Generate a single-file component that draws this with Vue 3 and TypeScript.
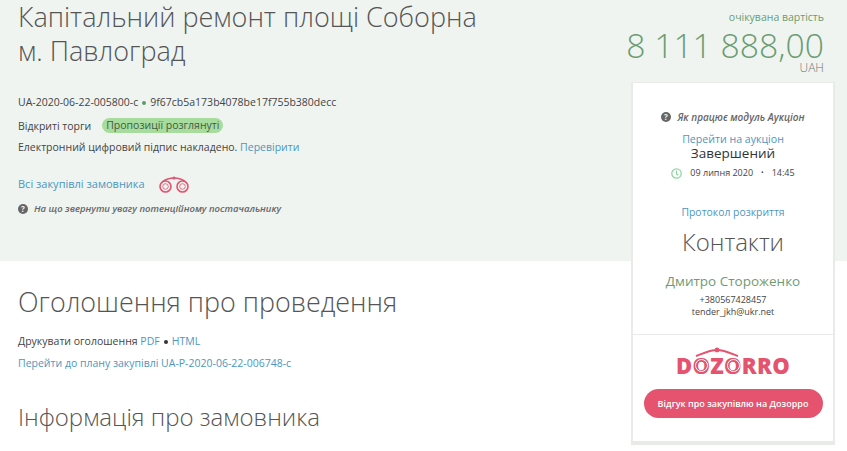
<template>
  <div class="page">
    <main class="left">
      <h1 class="title">Капітальний ремонт площі Соборна<br />м. Павлоград</h1>
      <p class="ids">UA-2020-06-22-005800-c<span class="dot green"></span>9f67cb5a173b4078be17f755b380decc</p>
      <p class="status">
        <span>Відкриті торги</span>
        <span class="badge">Пропозиції розглянуті</span>
      </p>
      <p class="sign">Електронний цифровий підпис накладено. <a>Перевірити</a></p>
      <p class="all">
        <a>Всі закупівлі замовника</a>
        <svg class="bino" width="32" height="17" viewBox="0 0 32 17" fill="none" stroke="#e0556f">
          <circle cx="7.5" cy="10.5" r="5.5" stroke-width="1.6" />
          <circle cx="7.5" cy="10.5" r="2.8" stroke-width="1" opacity="0.8" />
          <circle cx="24.5" cy="10.5" r="5.5" stroke-width="1.6" />
          <circle cx="24.5" cy="10.5" r="2.8" stroke-width="1" opacity="0.8" />
          <path d="M4 6 C8 3 11 2 16 2 C21 2 24 3 28 6" stroke-width="1.5" />
          <circle cx="16" cy="2" r="1.6" fill="#e0556f" stroke="none" />
        </svg>
      </p>
      <p class="hint">
        <svg width="10" height="10" viewBox="0 0 10 10"><circle cx="5" cy="5" r="5" fill="#666" /><text x="5" y="8" text-anchor="middle" class="q">?</text></svg>
        <em>На що звернути увагу потенційному постачальнику</em>
      </p>

      <h2 class="notice">Оголошення про проведення</h2>
      <p class="print">Друкувати оголошення <a>PDF</a><span class="dot"></span><a>HTML</a></p>
      <p class="plan"><a>Перейти до плану закупівлі UA-P-2020-06-22-006748-c</a></p>
      <h2 class="buyer">Інформація про замовника</h2>
    </main>

    <aside class="right">
      <div class="price">
        <div class="price-label">очікувана вартість</div>
        <div class="price-value">8 111 888,00</div>
        <div class="price-cur">UAH</div>
      </div>
      <div class="card">
        <div class="card-top">
          <p class="hint hint-center">
            <svg width="10" height="10" viewBox="0 0 10 10"><circle cx="5" cy="5" r="5" fill="#666" /><text x="5" y="8" text-anchor="middle" class="q">?</text></svg>
            <em>Як працює модуль Аукціон</em>
          </p>
          <a class="go">Перейти на аукціон</a>
          <div class="done">Завершений</div>
          <div class="date">
            <svg width="11" height="11" viewBox="0 0 11 11" fill="none" stroke="#8fd6a4" stroke-width="1.3">
              <circle cx="5.5" cy="5.5" r="4.7" />
              <path d="M5.5 2.6 V5.8 L7.4 7.2" />
            </svg>
            <span>09 липня 2020</span>
            <span class="sep">•</span>
            <span>14:45</span>
          </div>
          <a class="proto">Протокол розкриття</a>
          <div class="contacts">Контакти</div>
          <div class="person">Дмитро Стороженко</div>
          <div class="small phone">+380567428457</div>
          <div class="small">tender_jkh@ukr.net</div>
        </div>
        <div class="card-bottom">
          <div class="logo">
            <span>D</span>
            <span class="lens">O</span>
            <span>Z</span>
            <span class="lens">O</span>
            <span>RRO</span>
            <svg class="logo-arc" width="50" height="10" viewBox="0 0 50 10" fill="none" stroke="#e5536e" stroke-width="2">
              <path d="M4 9 C12 6 18 3 25 3 C32 3 38 6 46 9" />
              <circle cx="25" cy="3" r="2.4" fill="#e5536e" stroke="none" />
            </svg>
          </div>
          <button class="review">Відгук про закупівлю на Дозорро</button>
        </div>
      </div>
    </aside>
  </div>
</template>

<script setup lang="ts">
</script>

<style>
html, body { margin: 0; background: #fff; }
</style>

<style scoped>
.page {
  display: flex;
  justify-content: space-between;
  height: 451px;
  overflow: hidden;
  background: linear-gradient(#eff4f1 261px, #fff 261px);
  font-family: "Open Sans", "Noto Sans", sans-serif;
  font-size: 10.5px;
  color: #444;
}
a { color: #4d96bf; text-decoration: none; }
p { margin: 0; }
.left { padding: 0 0 0 18px; }
.title {
  margin: 0;
  font-size: 27px;
  line-height: 34px;
  font-weight: 300;
  color: #555;
}
.ids { margin-top: 27px; line-height: 14px; }
.dot {
  display: inline-block;
  width: 4px;
  height: 4px;
  margin: 0 4px;
  border-radius: 50%;
  background: #333;
  vertical-align: 1px;
}
.green { background: #5c9a6a; }
.status { margin-top: 9px; display: flex; align-items: center; gap: 11px; line-height: 14px; }
.badge {
  background: #a8dc9e;
  border-radius: 8px;
  padding: 0 4px;
  line-height: 15px;
  color: #3f5c40;
}
.sign { margin-top: 7px; line-height: 14px; }
.all { margin-top: 21px; display: flex; align-items: center; gap: 13px; line-height: 18px; font-size: 11px; }
.hint { display: flex; align-items: center; gap: 6px; margin-top: 9px; color: #666; font-weight: 600; font-size: 9.5px; line-height: 14px; }
.q { font-size: 8px; font-weight: 700; fill: #eff4f1; font-style: normal; }
.notice {
  margin: 68px 0 0;
  font-size: 26.9px;
  line-height: 36px;
  font-weight: 300;
  color: #555;
}
.print { margin-top: 14px; line-height: 14px; }
.plan { margin-top: 8px; line-height: 14px; }
.buyer {
  margin: 31px 0 0;
  font-size: 24px;
  line-height: 32px;
  font-weight: 300;
  color: #555;
}
.right { width: 216px; }
.price { text-align: right; margin-left: -20px; padding-right: 23px; height: 82px; box-sizing: border-box; color: #6b9c72; }
.price-label { padding-top: 10px; font-size: 10.5px; line-height: 14px; }
.price-value { font-size: 33.7px; line-height: 36px; font-weight: 300; margin-top: 3px; white-space: nowrap; color: #6b9c72; }
.price-cur { font-size: 12px; line-height: 10px; font-weight: 300; color: #777; }
.card {
  width: 204px;
  height: 363px;
  box-sizing: border-box;
  background: #fff;
  border: solid #e9ebe9;
  border-width: 1px 2px 4px;
  text-align: center;
}
.card-top { height: 252px; border-bottom: 1px solid #e9ebe9; padding-top: 27px; box-sizing: border-box; }
.hint-center { justify-content: center; margin: 0; font-size: 10px; }
.go { display: block; font-size: 10.6px; line-height: 14px; margin-top: 8px; }
.done { font-size: 13.5px; line-height: 16px; margin-top: -1px; color: #333; }
.date { display: flex; justify-content: center; align-items: center; gap: 8px; margin-top: 5px; font-size: 9px; line-height: 14px; color: #444; }
.sep { font-size: 7px; }
.proto { display: block; margin-top: 25px; line-height: 14px; font-size: 10.4px; }
.contacts { margin-top: 6px; font-size: 24px; font-weight: 300; line-height: 34px; color: #555; }
.person { margin-top: 12px; font-size: 13.5px; line-height: 20px; color: #6f9a73; }
.small { font-size: 9px; line-height: 12px; color: #444; }
.phone { margin-top: 3px; }
.card-bottom { padding-top: 15px; display: flex; flex-direction: column; align-items: center; }
.logo {
  position: relative;
  display: flex;
  font-family: "Open Sans", sans-serif;
  font-weight: 800;
  font-size: 22px;
  line-height: 30px;
  letter-spacing: 0.3px;
  color: #e5536e;
}
.lens { position: relative; }
.lens::after {
  content: "";
  position: absolute;
  left: 50%;
  top: 50%;
  width: 11px;
  height: 11px;
  margin: -6px 0 0 -6px;
  border: 1px solid #fff;
  border-radius: 50%;
}
.logo-arc { position: absolute; left: 16px; top: -3px; }
.review {
  margin-top: 9px;
  width: 179px;
  height: 29px;
  padding: 0;
  border: 0;
  border-radius: 15px;
  background: #e5536e;
  color: #fff;
  font-family: inherit;
  font-size: 9px;
  font-weight: 600;
  white-space: nowrap;
}
</style>
